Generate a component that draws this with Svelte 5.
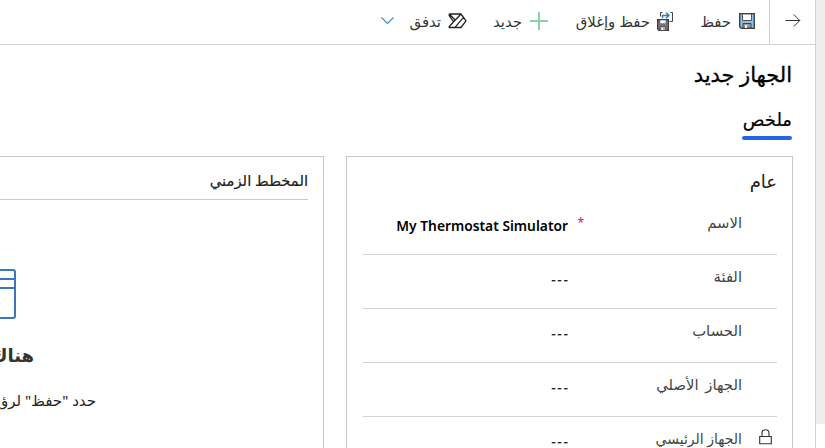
<script>
  const rows = [
    { label: 'الاسم', value: 'My Thermostat Simulator', required: true },
    { label: 'الفئة', value: '---' },
    { label: 'الحساب', value: '---' },
    { label: 'الجهاز الأصلي', value: '---', wide: true },
    { label: 'الجهاز الرئيسي', value: '---', locked: true }
  ];
</script>

<div class="app" dir="rtl">
  <div class="rail"></div>
  <main>
    <nav>
      <button class="back" aria-label="رجوع">
        <svg width="16" height="14" viewBox="0 0 16 14"><path d="M.5 6.5h14.3M8.8.5l6 6-6 6" fill="none" stroke="#333" /></svg>
      </button>
      <button class="save">
        <svg width="16" height="16" viewBox="0 0 16 16">
          <path d="M.7.7h14.6v14.6H2.2L.7 13.8z" fill="#83c0ea" stroke="#3b3b3b" stroke-width="1.3" />
          <path d="M3.5 1h9v6.5h-9z" fill="#fff" stroke="#555" />
          <path d="M4 10.5h8V15H4z" fill="#999" stroke="#444" /><path d="M6 12h2v3H6z" fill="#fff" />
        </svg>
        <span>حفظ</span>
      </button>
      <button class="close">
        <svg width="17" height="19" viewBox="0 0 17 19">
          <path d="M3.5 4.5v-4H5.5M13.5.5h2v9h-3" fill="none" stroke="#444" />
          <path d="M5.5 6.2V3.5h6M9 .8l2.9 2.7L9 6.2" fill="none" stroke="#2e78bd" stroke-width="1.5" />
          <path d="M.6 7.6h10.8v10.8H2L.6 17z" fill="#777" stroke="#3b3b3b" stroke-width="1.2" />
          <path d="M3 8h6v3.7H3z" fill="#fff" stroke="#555" stroke-width=".6" />
          <path d="M3.3 14.5h5.4v4H3.3z" fill="#aaa" stroke="#444" stroke-width=".7" /><path d="M4.5 15.5h1.6V18H4.5z" fill="#fff" />
        </svg>
        <span>حفظ وإغلاق</span>
      </button>
      <button class="new">
        <svg width="18" height="18" viewBox="0 0 18 18"><path d="M9 0v18M0 9h18" stroke="#8bd2a5" stroke-width="2" /></svg>
        <span>جديد</span>
      </button>
      <button class="flow">
        <svg width="19" height="16" viewBox="0 0 19 16"><path d="M1.2 1h11.8l5 6.8-5 6.7H1.2v-1L13 1M1.2 1v1.6L5.5 8.6M1.2 1L7 6.8M15.5 4.4L7 14.3" fill="none" stroke="#222" stroke-width="1.3" stroke-linejoin="round" /></svg>
        <span>تدفق</span>
        <svg class="chev" width="13" height="8" viewBox="0 0 13 8"><path d="M.5 .5l6 6 6-6" fill="none" stroke="#4b86b4" stroke-width="1.1" /></svg>
      </button>
    </nav>
    <h1>الجهاز جديد</h1>
    <div class="tab">ملخص<i></i></div>
    <div class="cards">
      <section class="general">
        <h2>عام</h2>
        {#each rows as row}
          <div class="row">
            <div class="lock">
              {#if row.locked}
                <svg width="13" height="16" viewBox="0 0 13 16"><path d="M.7 7.5h11.6v7.3H.7zM3 7.5V4.2a3.5 3.5 0 0 1 7 0v3.3" fill="none" stroke="#333" stroke-width="1.1" /></svg>
              {/if}
            </div>
            <div class="label" class:compact={row.locked} class:wide={row.wide}>{row.label}</div>
            <div class="req">{row.required ? '*' : ''}</div>
            <div class="value" class:strong={row.required} dir="ltr">{row.value}</div>
          </div>
        {/each}
      </section>
      <section class="timeline">
        <h3>المخطط الزمني</h3>
        <div class="empty">
          <svg class="window" width="64" height="50" viewBox="0 0 64 50"><rect x="1" y="1" width="62" height="48" rx="2" fill="#fff" stroke="#3a79b8" stroke-width="2" /><path d="M1 10h62M1 19h62" stroke="#3a79b8" stroke-width="2" /></svg>
          <strong>هناك</strong>
          <p>حدد "حفظ" لرؤية</p>
        </div>
      </section>
    </div>
  </main>
</div>

<style>
  :global(body) { margin: 0; overflow: hidden; }
  .app { display: flex; width: 825px; height: 448px; overflow: hidden; background: #fff; color: #222; font-family: "Noto Sans", "DejaVu Sans", sans-serif; }
  .rail { width: 9px; height: 424px; background: #ededed; flex: none; }
  main { width: 815px; flex: none; border-right: 1px solid #d2d2d2; }
  nav { display: flex; height: 44px; border-bottom: 1px solid #d2d2d2; }
  button { display: flex; align-items: center; flex: none; padding: 0; border: 0; background: none; font: 14.9px/20px "Noto Sans", "DejaVu Sans", sans-serif; color: #333; box-sizing: border-box; height: 42px; white-space: nowrap; }
  button svg { flex: none; }
  button span { margin-top: -1px; }
  .back { width: 46px; height: 44px; border-left: 1px solid #d2d2d2; padding-right: 14px; padding-bottom: 3px; }
  .save { width: 95px; padding-right: 14px; gap: 8px; }
  .close { width: 126px; gap: 7px; }
  .new { width: 81px; gap: 8px; }
  .flow { gap: 7px; }
  .chev { margin-right: 9px; }
  h1 { margin: 13px 23px 0 0; height: 32px; font-size: 21px; line-height: 32px; font-weight: 400; color: #000; -webkit-text-stroke: .35px #000; }
  .tab { margin: 15px 23px 0 0; width: 50px; height: 35px; font-size: 18px; line-height: 29px; color: #000; white-space: nowrap; -webkit-text-stroke: .2px #000; }
  .tab i { display: block; height: 4px; margin-top: 2px; border-radius: 2px; background: #2266e3; }
  .cards { display: flex; gap: 22px; margin: 16px 22px 0 0; }
  section { flex: none; box-sizing: border-box; height: 310px; border: 1px solid #c8c8c8; }
  .general { width: 447px; padding: 0 15px 0 16px; }
  h2 { margin: 9px 0 0; height: 35px; font-size: 18px; line-height: 30px; font-weight: 400; }
  .row { display: flex; height: 53px; border-bottom: 1px solid #d2d2d2; }
  .lock { width: 35px; padding: 11px 5px 0 0; box-sizing: border-box; }
  .label { width: 158px; font-size: 14.8px; line-height: 20px; padding-top: 11px; color: #444; white-space: nowrap; }
  .compact { font-size: 14px; padding-top: 12px; }
  .wide { word-spacing: 3px; }
  .req { width: 16px; color: #d8203a; font-size: 12px; padding-top: 12px; line-height: 20px; }
  .value { flex: 1; text-align: right; font-size: 14px; line-height: 20px; padding-top: 15px; color: #222; letter-spacing: 1.6px; margin-right: -1.6px; -webkit-text-stroke: .1px #222; }
  .strong { font-weight: 600; font-size: 13.8px; color: #000; letter-spacing: 0; margin-right: 0; -webkit-text-stroke: 0; }
  .timeline { width: 420px; padding: 0 15px; }
  h3 { margin: 0; height: 42px; border-bottom: 1px solid #c8c8c8; font-size: 14.8px; line-height: 46px; font-weight: 400; -webkit-text-stroke: .2px #222; }
  .empty { width: 360px; margin-right: 213px; padding-top: 69px; white-space: nowrap; }
  .window { display: block; margin-right: 79px; }
  strong { display: block; margin: 22px 61px 0 0; font-size: 18px; line-height: 28px; color: #333; }
  p { margin: 19px -1px 0 0; font-size: 15px; line-height: 24px; }
</style>
